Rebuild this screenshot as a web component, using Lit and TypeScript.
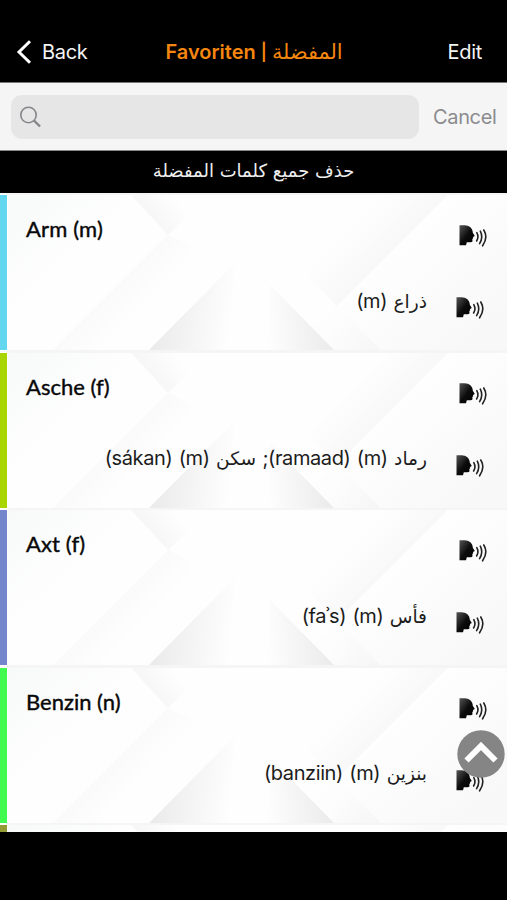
import { LitElement, html, css } from "lit";
import { customElement, property } from "lit/decorators.js";

type Segment = { text: string; ar?: boolean };
type Word = { color: string; term: string; spacing: number; translation: Segment[] };

const words: Word[] = [
  { color: "#63d7ef", term: "Arm (m)", spacing: 0.15, translation: [{ text: "(m)" }, { text: "ذراع", ar: true }] },
  {
    color: "#a9d600", term: "Asche (f)", spacing: 0, 
    translation: [{ text: "(sákan)" }, { text: "(m)" }, { text: "سكن", ar: true }, { text: ";(ramaad)" }, { text: "(m)" }, { text: "رماد", ar: true }],
  },
  { color: "#7386cb", term: "Axt (f)", spacing: 0.1, translation: [{ text: "(faʾs)" }, { text: "(m)" }, { text: "فأس", ar: true }] },
  { color: "#42fb50", term: "Benzin (n)", spacing: 0, translation: [{ text: "(banziin)" }, { text: "(m)" }, { text: "بنزين", ar: true }] },
  { color: "#939b34", term: "", spacing: 0, translation: [] },
];

@customElement("speak-icon")
class SpeakIcon extends LitElement {
  static styles = css`
    :host { display: block; width: 29px; height: 24px; }
    svg { display: block; }
  `;
  render() {
    return html`<svg width="29" height="24" viewBox="0 0 29 24">
      <defs><linearGradient id="head" x1="0" y1="0" x2="1" y2="1">
        <stop offset="0" stop-color="#555" /><stop offset=".5" stop-color="#0c0c0c" /><stop offset="1" stop-color="#000" />
      </linearGradient></defs>
      <path d="M.5 1.2H5.5C10.2 1.2 13.8 4.2 13.8 8.7L15.8 11.9L14 12.9L14.2 14.3L13.3 15L13.5 17C13.2 18.5 11.4 18.3 7.8 18.2L7 21.3H.5Z" fill="url(#head)" />
      <g fill="none" stroke="#222" stroke-width="1.6" stroke-linecap="round">
        <path d="M17.8 8.6Q20.2 13 17.6 17" /><path d="M21.3 7.2Q24.6 13.4 20.6 19.6" /><path d="M24.8 6Q29.4 13.6 23.6 21.8" />
      </g>
    </svg>`;
  }
}

@customElement("word-row")
class WordRow extends LitElement {
  @property({ attribute: false }) word!: Word;
  static styles = css`
    :host { display: block; height: 157.5px; flex: none; box-sizing: border-box; padding-top: 2px; background: #f5f5f5; }
    .row { position: relative; height: 155px; display: flex; background: #fefefe; }
    .stripe { width: 7px; flex: none; z-index: 1; box-shadow: 0 0 0 1px #fff; }
    .facets { position: absolute; inset: 0; width: 507px; height: 155px; }
    .body { position: relative; flex: 1; display: flex; flex-direction: column; padding: 18px 14px 0 19px; }
    .line { display: flex; align-items: center; height: 34px; }
    .line.second { margin-top: 38px; justify-content: flex-end; }
    .term { flex: 1; font: 400 22px/30px Lato, sans-serif; color: #080808; -webkit-text-stroke: 0.4px #080808; position: relative; top: -1px; }
    .translation { display: flex; gap: 6.4px; align-items: baseline; direction: ltr; margin-right: 29px;
      font: 400 20px/28px Inter, sans-serif; color: #1c1c1c; position: relative; top: -1px; }
    .translation span { unicode-bidi: isolate; white-space: pre; letter-spacing: -0.4px; }
    .translation .ar { font-family: "DejaVu Sans", sans-serif; font-size: 18.6px; direction: rtl; letter-spacing: 0; }
    .first speak-icon { margin: 12px 5px 0 0; }
    .second speak-icon { margin: 12px 8px 0 0; }
  `;
  render() {
    const w = this.word;
    return html`<div class="row">
      <svg class="facets" viewBox="0 0 507 155" preserveAspectRatio="none">
        <defs>
          <linearGradient id="corner" gradientUnits="userSpaceOnUse" x1="20" y1="0" x2="75" y2="60"><stop offset="0" stop-color="#f8f9f9" /><stop offset="1" stop-color="#fefefe" /></linearGradient>
          <linearGradient id="left" gradientUnits="userSpaceOnUse" x1="155" y1="140" x2="228" y2="150"><stop offset="0" stop-color="#ebebeb" /><stop offset="1" stop-color="#fefefe" /></linearGradient>
          <linearGradient id="right" gradientUnits="userSpaceOnUse" x1="328" y1="150" x2="268" y2="156"><stop offset="0" stop-color="#ececec" /><stop offset="1" stop-color="#fefefe" /></linearGradient>
          <linearGradient id="top" gradientUnits="userSpaceOnUse" x1="148" y1="15" x2="172" y2="-3"><stop offset="0" stop-color="#f7f7f7" /><stop offset="1" stop-color="#fefefe" /></linearGradient>
          <linearGradient id="band" gradientUnits="userSpaceOnUse" x1="110" y1="98" x2="134" y2="122"><stop offset="0" stop-color="#fafafa" /><stop offset="1" stop-color="#fefefe" /></linearGradient>
          <linearGradient id="slope" gradientUnits="userSpaceOnUse" x1="394" y1="54" x2="362" y2="22"><stop offset="0" stop-color="#f8f8f8" /><stop offset="1" stop-color="#fefefe" /></linearGradient>
          <linearGradient id="foot" gradientUnits="userSpaceOnUse" x1="378" y1="155" x2="338" y2="125"><stop offset="0" stop-color="#f6f6f6" /><stop offset="1" stop-color="#fdfdfd" /></linearGradient>
          <linearGradient id="far" gradientUnits="userSpaceOnUse" x1="400" y1="50" x2="480" y2="140"><stop offset="0" stop-color="#fefefe" /><stop offset="1" stop-color="#f8f8f9" /></linearGradient>
        </defs>
        <path d="M7 0H130L80 70L7 140Z" fill="url(#corner)" />
        <path d="M131 0H210L168 40Z" fill="url(#top)" />
        <path d="M168 40L53 155H150L210 60Z" fill="url(#band)" />
        <path d="M448 0L337 111L250 24L274 0Z" fill="url(#slope)" />
        <path d="M448 0L337 111L381 155H507V0Z" fill="url(#far)" />
        <path d="M337 111L381 155H334L313 134Z" fill="url(#foot)" />
        <path d="M235 68L149 155H230Z" fill="url(#left)" />
        <path d="M270 90L334 155H268Z" fill="url(#right)" />
      </svg>
      <div class="stripe" style="background:${w.color}"></div>
      ${w.term
        ? html`<div class="body">
            <div class="line first"><div class="term" style="letter-spacing:${w.spacing}px">${w.term}</div><speak-icon></speak-icon></div>
            <div class="line second">
              <div class="translation">${w.translation.map((s) => html`<span class=${s.ar ? "ar" : ""}>${s.text}</span>`)}</div>
              <speak-icon></speak-icon>
            </div>
          </div>`
        : ""}
    </div>`;
  }
}

@customElement("app-root")
class AppRoot extends LitElement {
  static styles = css`
    :host { position: relative; display: flex; flex-direction: column; width: 507px; height: 900px; overflow: hidden; background: #000; font-family: Inter, sans-serif; }
    .nav { height: 83px; flex: none; box-sizing: border-box; padding: 22px 25px 0 16px; display: grid; grid-template-columns: 100px 1fr 90px; align-items: center; color: #f4f4f4; font-size: 20px; letter-spacing: -0.3px; border-bottom: 1px solid #777; }
    .back { display: flex; align-items: center; gap: 9px; }
    .title { display: flex; gap: 5px; justify-content: center; align-items: baseline; color: #f5860f; font-weight: 600; white-space: pre; letter-spacing: 0; }
    .bar { font-size: 17px; position: relative; top: -1px; }
    .title .ar { font-size: 20.8px; line-height: 24px; }
    .ar { font-family: "DejaVu Sans", sans-serif; font-weight: 400; direction: rtl; }
    .edit { text-align: right; }
    .search { height: 68px; flex: none; box-sizing: border-box; display: flex; align-items: center; padding: 0 11px; gap: 14px; background: #f5f5f5; border-bottom: 1px solid #888; color: #8b8b8f; font-size: 20px; letter-spacing: -0.35px; }
    .field { width: 408px; height: 44px; flex: none; border-radius: 11px; background: #e6e6e6; display: flex; align-items: center; padding-left: 8px; box-sizing: border-box; }
    .clear { height: 42px; flex: none; display: flex; align-items: center; justify-content: center; color: #eee; font-size: 18px; padding-bottom: 4px; box-sizing: border-box; }
    .list { height: 639px; flex: none; overflow: hidden; display: flex; flex-direction: column; background: #f6f6f6; }
    .up { position: absolute; left: 457px; top: 730px; }
  `;
  render() {
    return html`
      <div class="nav">
        <div class="back"><svg width="17" height="26" viewBox="0 0 17 26"><path d="M14 2.2L3 13L14 23.8" fill="none" stroke="#fff" stroke-width="3" /></svg><span>Back</span></div>
        <div class="title"><span>Favoriten</span><span class="bar">|</span><span class="ar">المفضلة</span></div>
        <div class="edit">Edit</div>
      </div>
      <div class="search">
        <div class="field"><svg width="24" height="24" viewBox="0 0 24 24" fill="none" stroke="#85858a"><circle cx="9.5" cy="10" r="7.7" stroke-width="1.6" /><path d="M15 15.5L21 21.5" stroke-width="2.4" /></svg></div>
        <span>Cancel</span>
      </div>
      <div class="clear ar">حذف جميع كلمات المفضلة</div>
      <div class="list">${words.map((w) => html`<word-row .word=${w}></word-row>`)}</div>
      <svg class="up" width="48" height="48" viewBox="0 0 48 48"><circle cx="24" cy="24" r="23.7" fill="#858585" /><path d="M9.5 30.5L24 16L38.5 30.5" fill="none" stroke="#fff" stroke-width="6" /></svg>
    `;
  }
}
